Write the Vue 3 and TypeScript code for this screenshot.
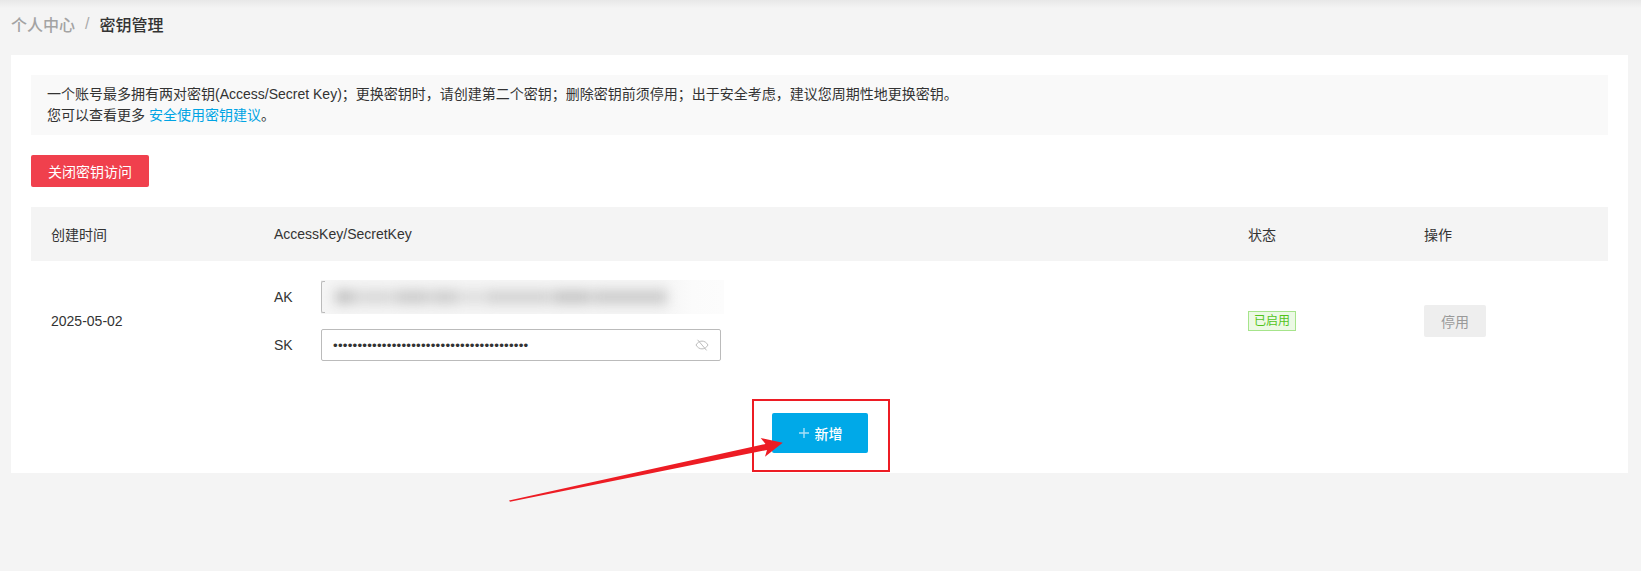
<template>
  <div class="page">
    <div class="top-shadow"></div>

    <!-- Breadcrumb -->
    <div class="breadcrumb">
      <span class="crumb-parent">个人中心</span>
      <span class="crumb-sep">/</span>
      <span class="crumb-current">密钥管理</span>
    </div>

    <div class="card">
      <div class="notice">
        <p>一个账号最多拥有两对密钥(Access/Secret Key)；更换密钥时，请创建第二个密钥；删除密钥前须停用；出于安全考虑，建议您周期性地更换密钥。</p>
        <p>您可以查看更多 <a class="link">安全使用密钥建议</a>。</p>
      </div>

      <button class="close-btn">关闭密钥访问</button>

      <!-- Key table -->
      <div class="table-head table-grid">
        <div>创建时间</div>
        <div>AccessKey/SecretKey</div>
        <div>状态</div>
        <div>操作</div>
      </div>
      <div class="table-row table-grid">
        <div>2025-05-02</div>
        <div class="keys">
          <div class="key-line">
            <span class="key-label">AK</span>
            <div class="ak-input">
              <div class="ak-blur">
                <span
                  v-for="(seg, i) in akSegments"
                  :key="i"
                  :style="{ width: seg.w + 'px', opacity: seg.o }"
                ></span>
              </div>
            </div>
          </div>
          <div class="key-line">
            <span class="key-label">SK</span>
            <div class="sk-input">
              <span class="sk-dots">{{ secretDots }}</span>
              <svg class="eye" width="14" height="14" viewBox="0 0 14 14" fill="none" stroke="#bcbcbc" stroke-width="1">
                <path d="M1 7C2.6 4.4 4.6 3.1 7 3.1S11.4 4.4 13 7C11.4 9.6 9.4 10.9 7 10.9S2.6 9.6 1 7Z" />
                <path d="M2.6 1.8L11.6 12.4" />
              </svg>
            </div>
          </div>
        </div>
        <div><span class="tag">已启用</span></div>
        <div><button class="disable-btn">停用</button></div>
      </div>

      <div class="add-wrap">
        <button class="add-btn">
          <svg class="plus" width="10" height="10" viewBox="0 0 10 10" stroke="#a8e0f7" stroke-width="1.4">
            <path d="M5 0V10M0 5H10" />
          </svg>
          新增
        </button>
      </div>
    </div>

    <!-- Red annotation drawn on the screenshot -->
    <svg class="annotation" width="1641" height="571" viewBox="0 0 1641 571">
      <rect x="753" y="400" width="136" height="71" fill="none" stroke="#ed1c24" stroke-width="2" />
      <path d="M509 500.6L765.5 444L760.7 438L782.7 442.7L765 456.7L767 450L510 501.8Z" fill="#ed1c24" />
    </svg>
  </div>
</template>

<script setup lang="ts">
const secretDots = '•'.repeat(40)

// rough shape of the blurred key text
const akSegments = [
  { w: 20, o: 1 },
  { w: 36, o: 0.6 },
  { w: 34, o: 0.85 },
  { w: 28, o: 0.8 },
  { w: 22, o: 0.45 },
  { w: 66, o: 0.7 },
  { w: 38, o: 0.95 },
  { w: 74, o: 0.85 }
]
</script>

<style>
html,
body {
  margin: 0;
  background: #f4f4f4;
}
</style>

<style scoped>
.page {
  position: relative;
  width: 1641px;
  height: 571px;
  box-sizing: border-box;
  padding: 0 13px 0 11px;
  background: #f4f4f4;
  overflow: hidden;
  font-family: "Liberation Sans", "Noto Sans CJK SC", sans-serif;
  color: #333;
}

.top-shadow {
  position: absolute;
  top: 0;
  left: 0;
  right: 0;
  height: 8px;
  background: linear-gradient(#e8e8e8, #f4f4f4);
}

.breadcrumb {
  display: flex;
  align-items: center;
  height: 55px;
  padding-bottom: 7px;
  box-sizing: border-box;
  font-size: 16px;
}

.crumb-parent {
  color: #a3a3a3;
  font-weight: 500;
}

.crumb-sep {
  margin: 0 10px;
  color: #aaa;
}

.crumb-current {
  color: #333;
  font-weight: 500;
}

.card {
  box-sizing: border-box;
  height: 418px;
  padding: 20px 20px 0;
  background: #fff;
}

.notice {
  height: 60px;
  box-sizing: border-box;
  padding: 9px 16px 0;
  background: #f9f9f9;
  font-size: 14px;
  line-height: 21px;
}

.notice p {
  margin: 0;
}

.link {
  color: #00a4e4;
}

.close-btn {
  display: block;
  width: 118px;
  height: 32px;
  margin: 20px 0;
  padding: 0;
  border: none;
  border-radius: 2px;
  background: #f0404d;
  color: #fff;
  font: inherit;
  font-size: 14px;
}

.table-grid {
  display: grid;
  grid-template-columns: 223px 974px 176px 1fr;
  padding-left: 20px;
  font-size: 14px;
  align-items: center;
}

.table-head {
  height: 54px;
  background: #f4f4f4;
}

.table-row {
  height: 120px;
}

.keys {
  display: flex;
  flex-direction: column;
  gap: 15px;
  padding-bottom: 1px;
}

.key-line {
  display: flex;
  align-items: center;
}

.key-label {
  width: 47px;
}

.ak-input {
  position: relative;
  box-sizing: border-box;
  width: 403px;
  height: 34px;
  background: linear-gradient(90deg, #f5f5f5 0, #f5f5f5 85%, #fbfbfb 92%, #fcfcfc 100%);
  overflow: hidden;
}

.ak-input::before {
  content: "";
  position: absolute;
  top: 1px;
  bottom: 1px;
  left: 0;
  width: 3px;
  border: 1px solid #bbb;
  border-right: none;
  border-radius: 2px 0 0 2px;
  z-index: 1;
}

.ak-blur {
  display: flex;
  align-items: center;
  gap: 2px;
  height: 100%;
  padding-left: 14px;
  filter: blur(6px);
}

.ak-blur span {
  height: 14px;
  background: #c4c4c4;
}

.sk-input {
  display: flex;
  align-items: center;
  justify-content: space-between;
  box-sizing: border-box;
  width: 400px;
  height: 32px;
  padding: 0 11px;
  border: 1px solid #bbb;
  border-radius: 2px;
}

.sk-dots {
  font-size: 13.33px;
  letter-spacing: 0.22px;
  color: #333;
}

.eye {
  display: block;
}

.tag {
  display: block;
  box-sizing: border-box;
  width: 48px;
  height: 20px;
  border: 1px solid #a6e48b;
  background: #ecf9e5;
  color: #52c41a;
  font-size: 12px;
  line-height: 18px;
  text-align: center;
}

.disable-btn {
  display: block;
  width: 62px;
  height: 32px;
  padding: 0;
  border: none;
  border-radius: 2px;
  background: #eee;
  color: #999;
  font: inherit;
  font-size: 14px;
}

.add-wrap {
  display: flex;
  justify-content: center;
  margin-top: 32px;
}

.add-btn {
  display: flex;
  align-items: center;
  justify-content: center;
  width: 96px;
  height: 40px;
  padding: 0 0 0 2px;
  border: none;
  border-radius: 2px;
  background: #00a9e8;
  color: #fff;
  font: inherit;
  font-size: 14px;
  font-weight: 500;
}

.plus {
  display: block;
  margin-right: 6px;
}

.annotation {
  position: absolute;
  top: 0;
  left: 0;
  pointer-events: none;
}
</style>
